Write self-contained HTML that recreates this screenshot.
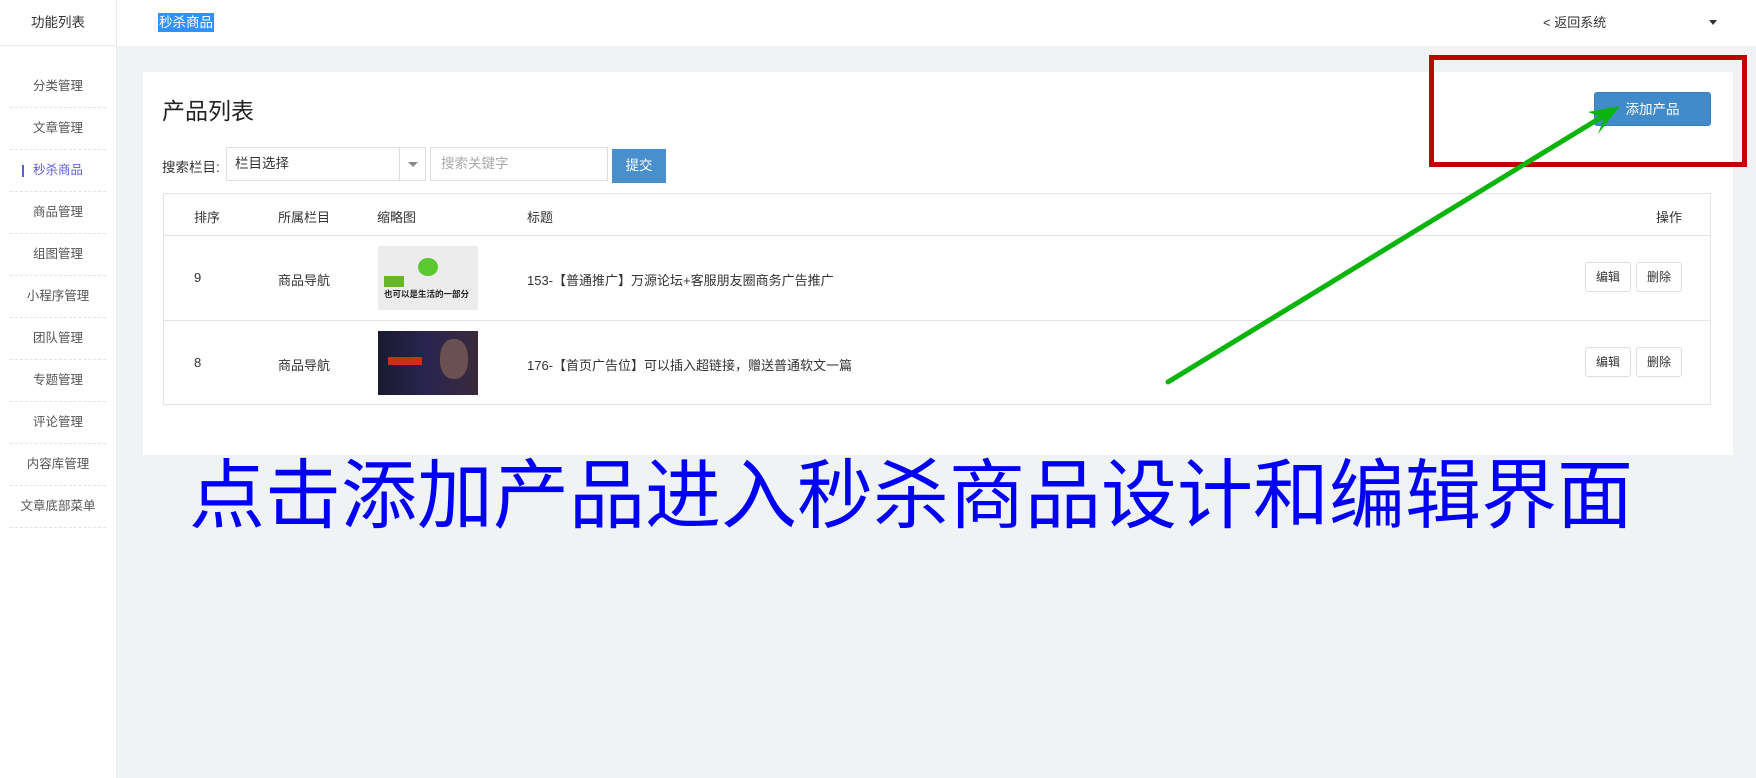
<!DOCTYPE html>
<html><head><meta charset="utf-8"><style>
*{margin:0;padding:0;box-sizing:border-box}
body{width:1756px;height:778px;overflow:hidden;background:#f0f3f4;font-family:"Liberation Sans","Noto Sans CJK SC",sans-serif;font-size:13px;color:#333;position:relative}
.side{position:absolute;left:0;top:0;width:117px;height:778px;background:#fff;border-right:1px solid #e8ebec}
.side .hd{height:46px;border-bottom:1px solid #e8ebec;text-align:center;line-height:46px;font-size:13.5px;color:#333}
.side ul{list-style:none;margin-top:20px}
.side li{height:42px;line-height:41px;text-align:center;margin:0 10px;border-bottom:1px dashed #e3e3e3;color:#555;font-size:12.5px;position:relative}
.side li.on{color:#5c5cd6}
.side li.on:before{content:"";position:absolute;left:12px;top:15px;width:2px;height:12px;background:#5c5cd6}
.top{position:absolute;left:117px;top:0;right:0;height:46px;background:#fff}
.ttl{position:absolute;left:41px;top:13px;background:#3390ff;color:#fff;font-size:13.5px;line-height:19px;padding:0 1px}
.back{position:absolute;left:1426px;top:13px;font-size:13px;line-height:19px;color:#333}
.caret{position:absolute;left:1592px;top:20px;border:4px solid transparent;border-top:5px solid #333}
.card{position:absolute;left:143px;top:72px;width:1590px;height:383px;background:#fff}
h1{position:absolute;left:162px;top:92px;font-size:23px;font-weight:normal;color:#222}
.lab{position:absolute;left:162px;top:156px;font-size:13.5px}
.sel{position:absolute;left:226px;top:147px;width:200px;height:34px;border:1px solid #ddd;line-height:32px;padding-left:8px;font-size:13.5px}
.sel i{position:absolute;right:0;top:0;width:26px;height:32px;border-left:1px solid #ddd}
.sel i:after{content:"";position:absolute;left:8px;top:14px;border:5px solid transparent;border-top:5px solid #888}
.inp{position:absolute;left:430px;top:147px;width:178px;height:34px;border:1px solid #ddd;line-height:32px;padding-left:10px;color:#aaa;font-size:13.5px}
.sub{position:absolute;left:612px;top:149px;width:54px;height:34px;background:#4a8fcd;color:#fff;line-height:34px;text-align:center;font-size:13.5px}
.tb{position:absolute;left:163px;top:193px;width:1548px;height:212px;border:1px solid #e3e3e3}
.row{position:absolute;left:0;width:100%;border-bottom:1px solid #e3e3e3}
.c{position:absolute;font-size:13px;color:#333}
.thumb{position:absolute;left:214px;width:100px;height:64px}
.btn{position:absolute;width:46px;height:30px;border:1px solid #ddd;border-radius:3px;text-align:center;line-height:28px;font-size:12px;background:#fff}
.add{position:absolute;left:1594px;top:92px;width:117px;height:34px;background:#428bca;border-radius:3px;color:#fff;text-align:center;line-height:33px;font-size:13.5px;border:1px solid #3a7ebd}
.red{position:absolute;left:1429px;top:55px;width:318px;height:112px;border:5px solid #c00000}
.big{position:absolute;left:189px;top:446px;font-size:76px;line-height:86px;color:#0000f5;font-family:"Noto Sans CJK SC",sans-serif;white-space:nowrap}
</style></head><body>
<div class="side"><div class="hd">功能列表</div>
<ul><li>分类管理</li><li>文章管理</li><li class="on">秒杀商品</li><li>商品管理</li><li>组图管理</li><li>小程序管理</li><li>团队管理</li><li>专题管理</li><li>评论管理</li><li>内容库管理</li><li>文章底部菜单</li></ul></div>
<div class="top"><span class="ttl">秒杀商品</span><span class="back">&lt; 返回系统</span><span class="caret"></span></div>
<div class="card"></div>
<h1>产品列表</h1>
<span class="lab">搜索栏目:</span>
<div class="sel">栏目选择<i></i></div>
<div class="inp">搜索关键字</div>
<div class="sub">提交</div>
<div class="tb">
<div class="row" style="top:0;height:42px"><span class="c" style="left:30px;top:13px">排序</span><span class="c" style="left:114px;top:13px">所属栏目</span><span class="c" style="left:213px;top:13px">缩略图</span><span class="c" style="left:363px;top:13px">标题</span><span class="c" style="right:28px;top:13px">操作</span></div>
<div class="row" style="top:42px;height:85px"><span class="c" style="left:30px;top:34px">9</span><span class="c" style="left:114px;top:34px">商品导航</span>
<div class="thumb" style="top:10px;background:#ececec"><div style="position:absolute;left:40px;top:12px;width:20px;height:18px;border-radius:50%;background:#5bc82d"></div><div style="position:absolute;left:6px;top:30px;width:20px;height:11px;background:#67b52a"></div><div style="position:absolute;left:6px;top:42px;font-size:8.5px;font-weight:bold;color:#222;white-space:nowrap">也可以是生活的一部分</div></div>
<span class="c" style="left:363px;top:34px">153-【普通推广】万源论坛+客服朋友圈商务广告推广</span>
<div class="btn" style="left:1421px;top:26px">编辑</div><div class="btn" style="left:1472px;top:26px">删除</div></div>
<div class="row" style="top:127px;height:85px;border-bottom:none"><span class="c" style="left:30px;top:34px">8</span><span class="c" style="left:114px;top:34px">商品导航</span>
<div class="thumb" style="top:10px;background:linear-gradient(90deg,#1a1a30,#2a2450 50%,#3a2a3a)"><div style="position:absolute;left:62px;top:8px;width:28px;height:40px;border-radius:45%;background:#6a5050"></div><div style="position:absolute;left:10px;top:26px;width:34px;height:8px;background:#c8301a"></div></div>
<span class="c" style="left:363px;top:34px">176-【首页广告位】可以插入超链接，赠送普通软文一篇</span>
<div class="btn" style="left:1421px;top:26px">编辑</div><div class="btn" style="left:1472px;top:26px">删除</div></div>
</div>
<div class="add">添加产品</div>
<div class="red"></div>
<svg style="position:absolute;left:0;top:0" width="1756" height="778"><line x1="1168" y1="382" x2="1605" y2="115" stroke="#0bb40b" stroke-width="5" stroke-linecap="round"/><polygon points="1620,106 1588,112 1604,118 1598,134" fill="#0bb40b"/></svg>
<div class="big">点击添加产品进入秒杀商品设计和编辑界面</div>
</body></html>
